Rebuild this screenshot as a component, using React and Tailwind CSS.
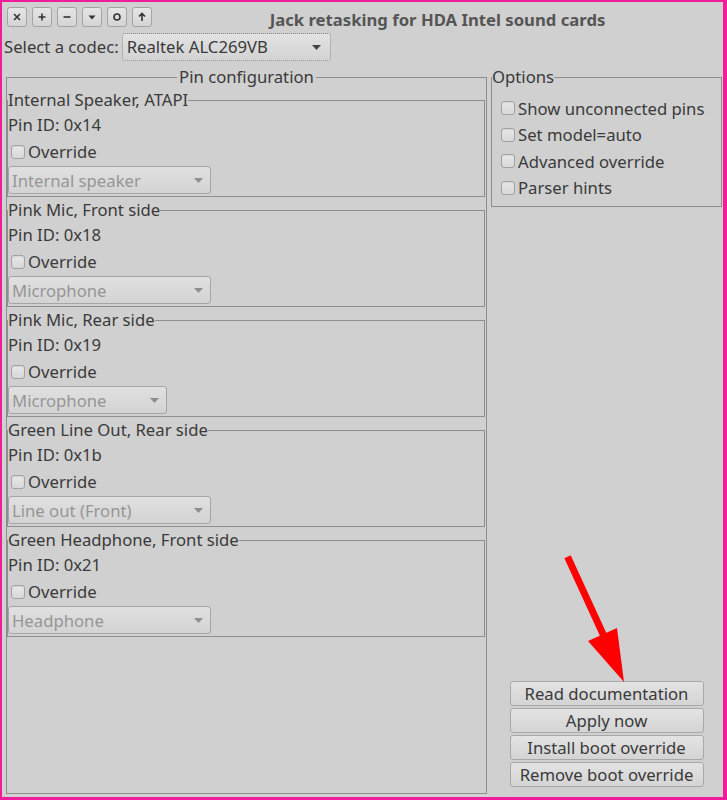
import React from "react";

function TitleBtn({ children }) {
  return (
    <div className="w-[20px] h-[20px] rounded-[3px] border border-[#a4a4a4] bg-gradient-to-b from-[#e6e6e6] to-[#d4d4d4] flex items-center justify-center">
      <svg width="12" height="12" viewBox="0 0 12 12">
        {children}
      </svg>
    </div>
  );
}

function Arrow({ color = "#555" }) {
  return (
    <svg width="9" height="5" viewBox="0 0 9 5">
      <path d="M0 0 L9 0 L4.5 5 Z" fill={color} />
    </svg>
  );
}

function Box() {
  return (
    <div className="w-[14px] h-[14px] rounded-[3px] border border-[#a2a2a2] bg-gradient-to-b from-[#e8e8e8] to-[#d8d8d8] shadow-[inset_0_1px_1px_rgba(0,0,0,0.08)]" />
  );
}

function Check({ label }) {
  return (
    <div className="flex items-center h-[26.5px] pl-[9px]">
      <Box />
      <span className="ml-[3px]">{label}</span>
    </div>
  );
}

function Combo({ text, width }) {
  return (
    <div
      className="h-[28px] rounded-[3px] border border-[#a5a5a5] bg-gradient-to-b from-[#e0e0e0] to-[#d3d3d3] flex items-center justify-between pl-[3px] pr-[7px] text-[#969696]"
      style={{ width }}
    >
      <span className="pt-[1px]">{text}</span>
      <Arrow color="#8e8e8e" />
    </div>
  );
}

function PinGroup({ title, pin, value, width }) {
  return (
    <fieldset className="border border-[#8e8e8e] mr-[1px] mt-[3px] first:mt-[4px] pb-[2px]">
      <legend className="leading-[20px]">{title}</legend>
      <div className="pt-[3px] h-[27px] flex items-center">Pin ID: {pin}</div>
      <div className="h-[27px] flex items-center pl-[3px] pt-[2px]">
        <Box />
        <span className="ml-[3px]">Override</span>
      </div>
      <div className="mt-[2px]">
        <Combo text={value} width={width} />
      </div>
    </fieldset>
  );
}

export default function App() {
  return (
    <div className="relative w-[727px] h-[800px] border-t-2 border-l-2 border-r-[4px] border-b-[3px] border-[#f01c9c] bg-[#d0d0d0] flex flex-col font-['Noto_Sans',sans-serif] text-[16.7px] text-[#3a3a3a]">
      {/* title bar */}
      <div className="h-[30px] flex items-start pt-[5px] pl-[5px]">
        <div className="flex gap-[5px]">
          <TitleBtn>
            <path d="M3 3 L9 9 M9 3 L3 9" stroke="#333" strokeWidth="1.6" />
          </TitleBtn>
          <TitleBtn>
            <path d="M6 2.5 V9.5 M2.5 6 H9.5" stroke="#333" strokeWidth="1.6" />
          </TitleBtn>
          <TitleBtn>
            <path d="M2.5 6 H9.5" stroke="#333" strokeWidth="1.6" />
          </TitleBtn>
          <TitleBtn>
            <path d="M2.5 4.5 L9.5 4.5 L6 8.5 Z" fill="#333" />
          </TitleBtn>
          <TitleBtn>
            <circle cx="6" cy="6" r="3" fill="none" stroke="#333" strokeWidth="1.6" />
          </TitleBtn>
          <TitleBtn>
            <path d="M6 10 V2.5 M3 5.5 L6 2.5 L9 5.5" stroke="#333" strokeWidth="1.6" fill="none" />
          </TitleBtn>
        </div>
        <div className="flex-1 text-center font-bold text-[#555] leading-[26px]">
          Jack retasking for HDA Intel sound cards
        </div>
      </div>

      {/* codec row */}
      <div className="h-[30px] flex items-center pl-[2px]">
        <span>Select a codec:</span>
        <div className="ml-[3px] w-[209px] h-[28px] rounded-[3px] border border-dotted border-[#8c8c8c] bg-gradient-to-b from-[#e2e2e2] to-[#d3d3d3] flex items-center justify-between pl-[4px] pr-[9px]">
          <span>Realtek ALC269VB</span>
          <Arrow color="#444" />
        </div>
      </div>

      {/* main */}
      <div className="flex-1 flex mt-[5px] pl-[4px] pr-[1px] pb-[3px] gap-[4px] min-h-0">
        <fieldset className="w-[481px] border border-[#8e8e8e] flex flex-col">
          <legend align="center" className="mx-auto leading-[20px] px-[2px]">
            Pin configuration
          </legend>
          <PinGroup title="Internal Speaker, ATAPI" pin="0x14" value="Internal speaker" width={203} />
          <PinGroup title="Pink Mic, Front side" pin="0x18" value="Microphone" width={203} />
          <PinGroup title="Pink Mic, Rear side" pin="0x19" value="Microphone" width={159} />
          <PinGroup title="Green Line Out, Rear side" pin="0x1b" value="Line out (Front)" width={203} />
          <PinGroup title="Green Headphone, Front side" pin="0x21" value="Headphone" width={203} />
        </fieldset>

        <div className="flex-1 flex flex-col pb-[7px]">
          <fieldset className="border border-[#8e8e8e] pt-[8px] pb-[5px]">
            <legend className="leading-[20px]">Options</legend>
            <Check label="Show unconnected pins" />
            <Check label="Set model=auto" />
            <Check label="Advanced override" />
            <Check label="Parser hints" />
          </fieldset>
          <div className="flex-1" />
          <div className="flex flex-col items-center gap-[2px]">
            {["Read documentation", "Apply now", "Install boot override", "Remove boot override"].map((t) => (
              <div
                key={t}
                className="w-[194px] h-[25px] rounded-[3px] border border-[#a8a8a8] bg-gradient-to-b from-[#e3e3e3] to-[#d4d4d4] flex items-center justify-center"
              >
                {t}
              </div>
            ))}
          </div>
        </div>
      </div>

      {/* red annotation arrow */}
      <svg className="absolute pointer-events-none" width="727" height="800" viewBox="0 0 727 800" style={{ left: -2, top: -2 }}>
        <line x1="569" y1="560" x2="603" y2="634" stroke="#ff0000" strokeWidth="7" strokeLinecap="square" />
        <path d="M588 641 L617 628 L624 682 Z" fill="#ff0000" />
      </svg>
    </div>
  );
}
